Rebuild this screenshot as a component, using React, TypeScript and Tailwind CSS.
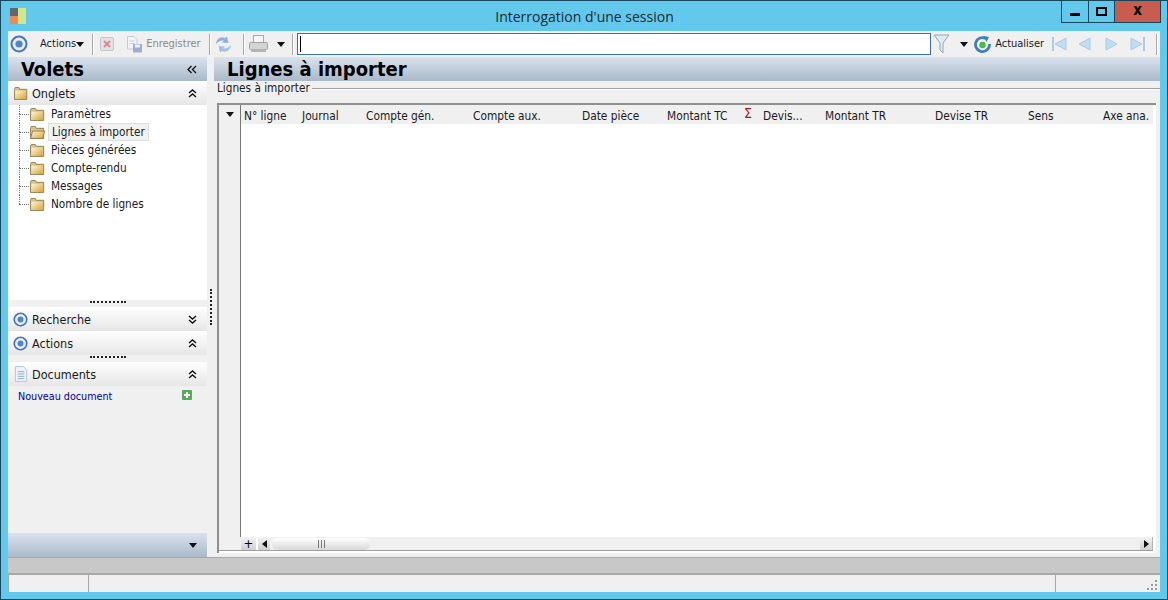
const tahoma = { fontFamily: '"DejaVu Sans Condensed", "DejaVu Sans", sans-serif' };

function Ring({ className = "", size = 18 }: { className?: string; size?: number }) {
  return (
    <svg width={size} height={size} viewBox="0 0 18 18" className={className}>
      <circle cx="9" cy="9" r="7.5" fill="#e8eef8" stroke="#4a76b8" strokeWidth="2" />
      <circle cx="9" cy="9" r="3.6" fill="#4f86c8" />
    </svg>
  );
}

function Caret({ className = "" }: { className?: string }) {
  return (
    <svg width="8" height="5" viewBox="0 0 8 5" className={className}>
      <path d="M0 0h8L4 5z" fill="#111" />
    </svg>
  );
}

function Folder({ open = false, width = 15 }: { open?: boolean; width?: number }) {
  return (
    <svg width={width} height="13" viewBox="0 0 17 14" preserveAspectRatio="none">
      <defs>
        <linearGradient id="fold" x1="0" y1="0" x2="1" y2="1">
          <stop offset="0" stopColor="#fff8d0" />
          <stop offset="1" stopColor="#d9a23a" />
        </linearGradient>
      </defs>
      <path d="M.5 2.5V13.5H15.5V2.5H7L6 .5H1.5z" fill="#d8c48a" stroke="#8a7a50" />
      {open ? (
        <path d="M.5 13.5L3 5.5H16.5L14.5 13.5z" fill="url(#fold)" stroke="#8a7a50" />
      ) : (
        <rect x="1.5" y="4" width="13" height="9" fill="url(#fold)" />
      )}
    </svg>
  );
}

function Chevrons({ up = false }: { up?: boolean }) {
  return (
    <svg width="9" height="9" viewBox="0 0 9 9">
      <path
        d={up ? "M1 4l3.5-3L8 4M1 8l3.5-3L8 8" : "M1 1l3.5 3L8 1M1 5l3.5 3L8 5"}
        fill="none"
        stroke="#111"
        strokeWidth="1.4"
      />
    </svg>
  );
}

function DocIcon() {
  return (
    <svg width="14" height="16" viewBox="0 0 15 17">
      <path d="M1.5.5H10L13.5 4V16.5H1.5z" fill="#eef3fb" stroke="#b4c2da" />
      <path d="M4 6h7M4 8.500h7M4 11h7M4 13.500h7" stroke="#8aa6d0" />
    </svg>
  );
}

function Separator({ className = "" }: { className?: string }) {
  return <div className={`h-[21px] w-[2px] border-l border-[#a9a9a9] bg-white ${className}`} />;
}

function NavArrow({ dir, bar = false, className = "" }: { dir: "left" | "right"; bar?: boolean; className?: string }) {
  const w = bar ? 15 : 13;
  return (
    <svg width={w} height="14" viewBox={`0 0 ${w} 14`} className={className}>
      {dir === "left" ? (
        <>
          {bar && <rect x="0" y="0" width="2" height="14" fill="#a9cbe9" />}
          <path d={`M${w - 1} 1V13L${bar ? 3 : 1} 7z`} fill="#c3dcf2" stroke="#a9cbe9" />
        </>
      ) : (
        <>
          <path d={`M1 1V13L${bar ? w - 3 : w - 1} 7z`} fill="#c3dcf2" stroke="#a9cbe9" />
          {bar && <rect x={w - 2} y="0" width="2" height="14" fill="#a9cbe9" />}
        </>
      )}
    </svg>
  );
}

function Toolbar() {
  return (
    <div className="flex h-[26px] items-center bg-[#f0f0f0] text-[11px] text-[#1a1a1a]">
      <Ring className="ml-[2px]" />
      <span className="ml-[12px]">Actions</span>
      <Caret />
      <Separator className="ml-[8px]" />
      <svg width="14" height="14" viewBox="0 0 14 14" className="ml-[6px]">
        <rect x=".5" y=".5" width="13" height="13" rx="1.5" fill="#e4e0e4" stroke="#c4c4cc" />
        <path d="M4 4l6 6M10 4l-6 6" stroke="#d88a92" strokeWidth="2" />
      </svg>
      <svg width="17" height="17" viewBox="0 0 17 17" className="ml-[12px]">
        <path d="M1.500.5H8L11 3.500V13H1.500z" fill="#f3f5f9" stroke="#c6ccd8" />
        <path d="M3.500 5h5M3.500 7.500h5" stroke="#c2cde0" />
        <rect x="7" y="8" width="9" height="8.500" fill="#9cb1d2" />
        <rect x="9" y="8.500" width="5" height="3" fill="#eef2f8" />
      </svg>
      <span className="ml-[3px] w-[54px] text-[#8a8a8a]">Enregistrer</span>
      <Separator className="ml-[9px]" />
      <svg width="17" height="17" viewBox="0 0 17 17" className="ml-[4px]">
        <path d="M1 8C1.500 3 6 0 10 2L12 .5l1.500 6.500-6.500-.5 1.800-1.800C6.500 3.800 4 5 1 8z" fill="#8fb2d8" />
        <path d="M16 9c-.5 5-5 8-9 6L5 16.500 3.500 10l6.500.5-1.800 1.800c2.300.9 4.800-.3 7.800-3.300z" fill="#a2c0e0" />
      </svg>
      <Separator className="ml-[11px]" />
      <svg width="19" height="18" viewBox="0 0 19 18" className="ml-[4px]">
        <rect x="4.500" y=".5" width="10" height="7" fill="#f5f5f5" stroke="#a8a8a8" />
        <rect x=".5" y="7.500" width="18" height="7" rx="1" fill="#d4d4d4" stroke="#a0a0a0" />
        <rect x="2" y="14" width="15" height="3" rx="1" fill="#b4b4b4" />
      </svg>
      <Caret className="ml-[9px]" />
      <Separator className="ml-[7px]" />
      <div className="ml-[3px] flex h-[22px] w-[634px] items-center border border-[#3a6ea5] bg-white pl-[2px]">
        <div className="h-[16px] w-px bg-black" />
      </div>
      <svg width="17" height="20" viewBox="0 0 17 20" className="ml-[2px]">
        <path d="M1 1H16L10 9V19L7 16V9z" fill="#dfeaf2" stroke="#8ea6b4" />
      </svg>
      <Caret className="ml-[10px]" />
      <svg width="17" height="17" viewBox="0 0 17 17" className="ml-[6px]">
        <path d="M12 2.500A7 7 0 1 0 15.500 8" fill="none" stroke="#3d7fb8" strokeWidth="2.800" />
        <path d="M9.500 0l5.500 1-2.500 5z" fill="#3d7fb8" />
        <circle cx="8.500" cy="9" r="3.200" fill="#4cb848" />
      </svg>
      <span className="ml-[4px] w-[48px]">Actualiser</span>
      <NavArrow dir="left" bar className="ml-[9px]" />
      <NavArrow dir="left" className="ml-[11px]" />
      <NavArrow dir="right" className="ml-[14px]" />
      <NavArrow dir="right" bar className="ml-[12px]" />
      <Separator className="ml-[11px]" />
    </div>
  );
}

function PanelHeader({ icon, label, up }: { icon: React.ReactNode; label: string; up: boolean }) {
  return (
    <div className="flex h-[24px] items-center bg-gradient-to-b from-white to-[#e6e6e6] pr-[10px] pl-[5px]">
      <div className="flex w-[15px] justify-center">{icon}</div>
      <span className="ml-[4px] flex-1 pt-[2px] text-[12.500px] text-[#1a1a1a]">{label}</span>
      <Chevrons up={up} />
    </div>
  );
}

function Dots({ className = "" }: { className?: string }) {
  return <div className={`mx-auto h-[2px] w-[36px] border-t-2 border-dotted border-[#222] ${className}`} />;
}

const tabs = ["Paramètres", "Lignes à importer", "Pièces générées", "Compte-rendu", "Messages", "Nombre de lignes"];

function Tree() {
  return (
    <div className="h-[195px] bg-white">
      {tabs.map((tab, i) => (
        <div key={tab} className="relative flex h-[18px] items-center pl-[22px]">
          <div className="absolute top-0 left-[11px] h-[9px] border-l border-dotted border-[#777]" />
          {i < tabs.length - 1 && (
            <div className="absolute top-[9px] left-[11px] h-[9px] border-l border-dotted border-[#777]" />
          )}
          <div className="absolute top-[9px] left-[11px] w-[10px] border-t border-dotted border-[#777]" />
          <Folder open={i === 1} />
          <span
            className={`ml-[3px] flex h-[18px] items-center pt-[2px] pr-[3px] pl-[3px] text-[11.700px] text-[#1a1a1a] ${
              i === 1 ? "border border-[#dcdcdc] bg-[#f2f2f2] pl-[2px]" : ""
            }`}
          >
            {tab}
          </span>
        </div>
      ))}
    </div>
  );
}

function Sidebar() {
  return (
    <div className="flex w-[199px] flex-col bg-[#f0f0f0]">
      <div className="flex h-[24px] items-center bg-gradient-to-b from-[#d9e3ee] to-[#aab9c8] pr-[10px] pl-[13px]">
        <span className="flex-1 text-[20px] leading-none font-bold text-black">Volets</span>
        <svg width="10" height="9" viewBox="0 0 10 9">
          <path d="M4.500 1L1 4.500 4.500 8M9 1L5.500 4.500 9 8" fill="none" stroke="#111" strokeWidth="1.300" />
        </svg>
      </div>
      <PanelHeader icon={<Folder width={14} />} label="Onglets" up />
      <Tree />
      <div className="h-[7px] bg-[#f0f0f0] pt-[1px]">
        <Dots />
      </div>
      <PanelHeader icon={<Ring size={15} />} label="Recherche" up={false} />
      <PanelHeader icon={<Ring size={15} />} label="Actions" up />
      <div className="h-[7px] bg-[#f0f0f0] pt-[1px]">
        <Dots />
      </div>
      <PanelHeader icon={<DocIcon />} label="Documents" up />
      <div className="flex flex-1 items-start justify-between pt-[3px] pr-[15px] pl-[10px]">
        <span className="text-[10.700px] text-[#00009c]">Nouveau document</span>
        <svg width="10" height="10" viewBox="0 0 10 10" className="mt-[1px]">
          <rect width="10" height="10" rx="1" fill="#58a858" />
          <path d="M5 2v6M2 5h6" stroke="#fff" strokeWidth="2" />
        </svg>
      </div>
      <div className="flex h-[24px] items-center justify-end bg-gradient-to-b from-[#d9e3ee] to-[#aab9c8] pr-[10px]">
        <Caret />
      </div>
    </div>
  );
}

const columns: [string, string][] = [
  ["N° ligne", "w-[58px]"],
  ["Journal", "w-[64px]"],
  ["Compte gén.", "w-[107px]"],
  ["Compte aux.", "w-[109px]"],
  ["Date pièce", "w-[85px]"],
  ["Montant TC", "w-[77px]"],
  ["Σ", "w-[19px]"],
  ["Devis...", "w-[62px]"],
  ["Montant TR", "w-[110px]"],
  ["Devise TR", "w-[93px]"],
  ["Sens", "w-[75px]"],
  ["Axe ana.", "w-[50px]"],
];

function Grid() {
  return (
    <div className="mt-[6px] mr-[4px] ml-[3px] flex min-h-0 flex-1 flex-col border-t-2 border-l-2 border-[#8f8f8f] bg-white pr-[3px] pb-[2px]">
      <div className="flex min-h-0 flex-1">
        <div className="flex w-[22px] flex-col border-r border-[#777] bg-[#f0f0f0]">
          <div className="flex h-[19px] items-center justify-center">
            <Caret />
          </div>
        </div>
        <div className="flex min-w-0 flex-1 flex-col">
          <div className="flex h-[19px] items-center overflow-hidden bg-[#f0f0f0] pt-[4px] pl-[3px] text-[11.800px] whitespace-nowrap text-[#1a1a1a]">
            {columns.map(([label, width]) => (
              <div
                key={label}
                className={`${width} shrink-0 ${label === "Σ" ? "mb-[7px] text-[14px] leading-none text-[#a01818]" : ""}`}
              >
                {label}
              </div>
            ))}
          </div>
          <div className="flex-1 bg-white" />
        </div>
      </div>
      <div className="flex h-[14px] items-center border-b border-[#a0a0a0] bg-[#f0f0f0] pl-[22px]">
        <div className="flex h-[13px] w-[17px] items-center justify-center border-r-2 border-white bg-gradient-to-b from-[#f4f4f4] to-[#cfcfcf] text-[13px] leading-none">
          +
        </div>
        <div className="flex h-[13px] w-[12px] items-center justify-center bg-gradient-to-b from-[#f4f4f4] to-[#cfcfcf]">
          <svg width="5" height="8" viewBox="0 0 5 8">
            <path d="M5 0V8L0 4z" fill="#111" />
          </svg>
        </div>
        <div className="ml-[2px] flex h-[12px] w-[98px] items-center justify-center rounded-[5px] bg-gradient-to-b from-white to-[#d8d8d8]">
          <div className="h-[8px] w-[7px] border-x border-[#777] bg-[linear-gradient(90deg,transparent_2px,#777_2px,#777_3px,transparent_3px)]" />
        </div>
        <div className="flex-1" />
        <div className="flex h-[13px] w-[13px] items-center justify-center border-r border-[#b4b4b4] bg-gradient-to-b from-[#f4f4f4] to-[#cfcfcf]">
          <svg width="5" height="8" viewBox="0 0 5 8">
            <path d="M0 0V8L5 4z" fill="#111" />
          </svg>
        </div>
      </div>
    </div>
  );
}

function Content() {
  return (
    <div className="flex min-w-0 flex-1 flex-col bg-[#f0f0f0]">
      <div className="flex h-[24px] items-center bg-gradient-to-b from-[#d9e3ee] to-[#aab9c8] pl-[13px]">
        <span className="text-[20px] leading-none font-bold text-black">Lignes à importer</span>
      </div>
      <div className="flex h-[16px] items-center pl-[3px]">
        <span className="text-[11.700px] text-[#1a1a1a]">Lignes à importer</span>
        <div className="ml-[2px] flex-1 border-t border-b border-t-[#a0a0a0] border-b-white" />
      </div>
      <Grid />
      <div className="h-[4px]" />
    </div>
  );
}

function StatusBar() {
  return (
    <div className="flex h-[19px] border-t-2 border-[#a8a8a8] bg-[#f0f0f0]">
      <div className="w-[80px] border-l border-[#a8a8a8]" />
      <div className="w-[967px] border-l border-[#a8a8a8]" />
      <div className="flex flex-1 items-end justify-end border-l border-[#a8a8a8] pr-[3px] pb-[2px]">
        <svg width="10" height="10" viewBox="0 0 10 10">
          <path d="M8 0h2v2H8zM4 4h2v2H4zM8 4h2v2H8zM0 8h2v2H0zM4 8h2v2H4zM8 8h2v2H8z" fill="#9a9a9a" />
        </svg>
      </div>
    </div>
  );
}

export default function App() {
  return (
    <div className="flex h-[600px] w-[1168px] flex-col border border-[#16465c] bg-[#62c9ec] px-[7px] pb-[7px]" style={tahoma}>
      <div className="flex h-[30px] shrink-0 items-start">
        <svg width="16" height="16" viewBox="0 0 16 16" className="mt-[7px] ml-[2px]">
          <rect width="8" height="8" fill="#666" />
          <rect y="8" width="8" height="8" fill="#f08a50" />
          <rect x="8" width="8" height="16" fill="#cfe88a" />
        </svg>
        <div
          className="ml-[-18px] flex h-[30px] flex-1 justify-center pt-[5px] pl-[100px] text-[14px] text-[#1a2a33]"
          style={{ fontFamily: '"Open Sans", sans-serif' }}
        >
          Interrogation d'une session
        </div>
        <div className="mr-[-1px] flex h-[22px] border border-t-0 border-[#16465c]">
          <div className="flex w-[27px] items-end justify-center border-r border-[#16465c] pb-[6px]">
            <div className="h-[3px] w-[10px] bg-black" />
          </div>
          <div className="flex w-[26px] items-center justify-center border-r border-[#16465c]">
            <div className="h-[9px] w-[11px] border-2 border-black" />
          </div>
          <div className="flex w-[45px] items-center justify-center bg-[#c75c4f] pb-[3px] text-[15px] leading-none font-bold text-black">
            x
          </div>
        </div>
      </div>
      <Toolbar />
      <div className="flex min-h-0 flex-1">
        <Sidebar />
        <div className="flex w-[7px] flex-col items-center justify-center bg-[#f0f0f0]">
          <div className="h-[36px] w-0 border-l-2 border-dotted border-[#222]" />
        </div>
        <Content />
      </div>
      <div className="h-[16px] shrink-0 border-t border-[#a8a8a8] bg-[#c8c8c8]" />
      <StatusBar />
    </div>
  );
}
